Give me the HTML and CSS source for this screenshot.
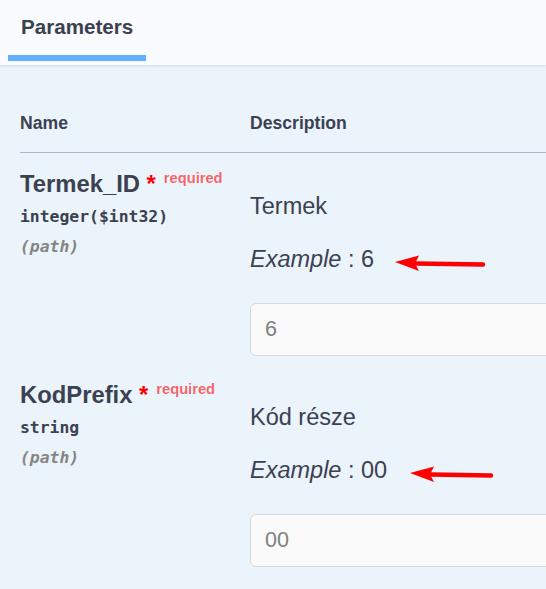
FILE: index.html
```html
<!DOCTYPE html>
<html lang="en">
<head>
<meta charset="utf-8">
<title>Parameters</title>
<link rel="stylesheet" href="styles.css">
</head>
<body>
<div class="panel">
  <div class="section-header">
    <div class="tab"><h4 class="tab-title">Parameters</h4></div>
  </div>
  <div class="params">
    <div class="row head">
      <div class="col-name">Name</div>
      <div class="col-desc">Description</div>
    </div>
    <div class="row param">
      <div class="col-name">
        <div class="pname">Termek_ID<span class="star">&nbsp;*</span><span class="req">required</span></div>
        <div class="ptype">integer($int32)</div>
        <div class="pin">(path)</div>
      </div>
      <div class="col-desc">
        <p class="md">Termek</p>
        <p class="example"><i>Example</i> : 6<svg class="arrow" width="92" height="18" viewBox="0 0 92 18"><line x1="21" y1="9.5" x2="89" y2="10.5" stroke="#ff0000" stroke-width="4.5" stroke-linecap="round"/><polygon points="1,8 25,1.5 21,9.5 25,17" fill="#ff0000"/></svg></p>
        <input class="field" type="text" value="6">
      </div>
    </div>
    <div class="row param">
      <div class="col-name">
        <div class="pname">KodPrefix<span class="star">&nbsp;*</span><span class="req">required</span></div>
        <div class="ptype">string</div>
        <div class="pin">(path)</div>
      </div>
      <div class="col-desc">
        <p class="md">Kód része</p>
        <p class="example"><i>Example</i> : 00<svg class="arrow arrow-short" width="86" height="18" viewBox="0 0 86 18"><line x1="21" y1="9.5" x2="82" y2="10.5" stroke="#ff0000" stroke-width="4.5" stroke-linecap="round"/><polygon points="1,8 25,1.5 21,9.5 25,17" fill="#ff0000"/></svg></p>
        <input class="field" type="text" value="00">
      </div>
    </div>
  </div>
</div>
</body>
</html>
```
FILE: styles.css
```css
html, body {
  margin: 0;
  padding: 0;
  overflow: hidden;
}
body {
  background: #ebf3fb;
  color: #3b4151;
  font-family: "Liberation Sans", Arial, sans-serif;
}
.panel {
  width: 546px;
  height: 589px;
  overflow: hidden;
}
.section-header {
  height: 65px;
  background: #f9fbfe;
  box-shadow: 0 1px 2px rgba(0, 0, 0, 0.1);
  padding-left: 8px;
  display: flex;
  position: relative;
  z-index: 1;
}
.tab {
  padding: 15px 13px 0;
  display: flex;
  flex-direction: column;
}
.tab::after {
  content: "";
  display: block;
  height: 6px;
  margin: 16px -13px 0;
  background: #61affe;
}
.tab-title {
  margin: 0;
  font-size: 20.6px;
  line-height: 24px;
  font-weight: bold;
  color: #3b4151;
}
.params {
  padding: 48px 0 0 20px;
  width: 900px;
}
.row {
  display: grid;
  grid-template-columns: 230px 1fr;
}
.head {
  font-size: 17.6px;
  line-height: 20px;
  font-weight: bold;
  padding-bottom: 19px;
  border-bottom: 1px solid #aeb6c2;
}
.param {
  padding: 17px 0 7.7px;
}
.pname {
  font-size: 23.8px;
  line-height: 27px;
  font-weight: bold;
  white-space: nowrap;
}
.star {
  color: #ff0000;
}
.req {
  color: rgba(255, 0, 0, 0.6);
  font-size: 14.7px;
  padding-left: 8px;
  position: relative;
  top: -9px;
}
.ptype {
  font-family: "DejaVu Sans Mono", "Liberation Mono", monospace;
  font-weight: bold;
  font-size: 16.4px;
  line-height: 20px;
  padding: 6px 0 10px;
}
.pin {
  font-family: "DejaVu Sans Mono", "Liberation Mono", monospace;
  font-weight: bold;
  font-style: italic;
  font-size: 16.4px;
  line-height: 20px;
  color: #858585;
}
.col-desc {
  padding-top: 22.7px;
}
.head .col-desc {
  padding-top: 0;
}
.md {
  margin: 0;
  font-size: 23.5px;
  line-height: 27px;
}
.example {
  margin: 26px 0 0;
  font-size: 23.5px;
  line-height: 27px;
  white-space: nowrap;
}
.arrow {
  display: inline-block;
  vertical-align: -5px;
  margin-left: 20px;
}
.arrow-short {
  margin-left: 22px;
}
.field {
  display: block;
  box-sizing: border-box;
  margin-top: 30.6px;
  width: 490px;
  height: 53px;
  padding: 0 14px;
  background: #fafafa;
  border: 1px solid #d9d9d9;
  border-radius: 6px;
  font-family: "Liberation Sans", Arial, sans-serif;
  font-size: 21.5px;
  color: #808080;
  outline: none;
}
```
